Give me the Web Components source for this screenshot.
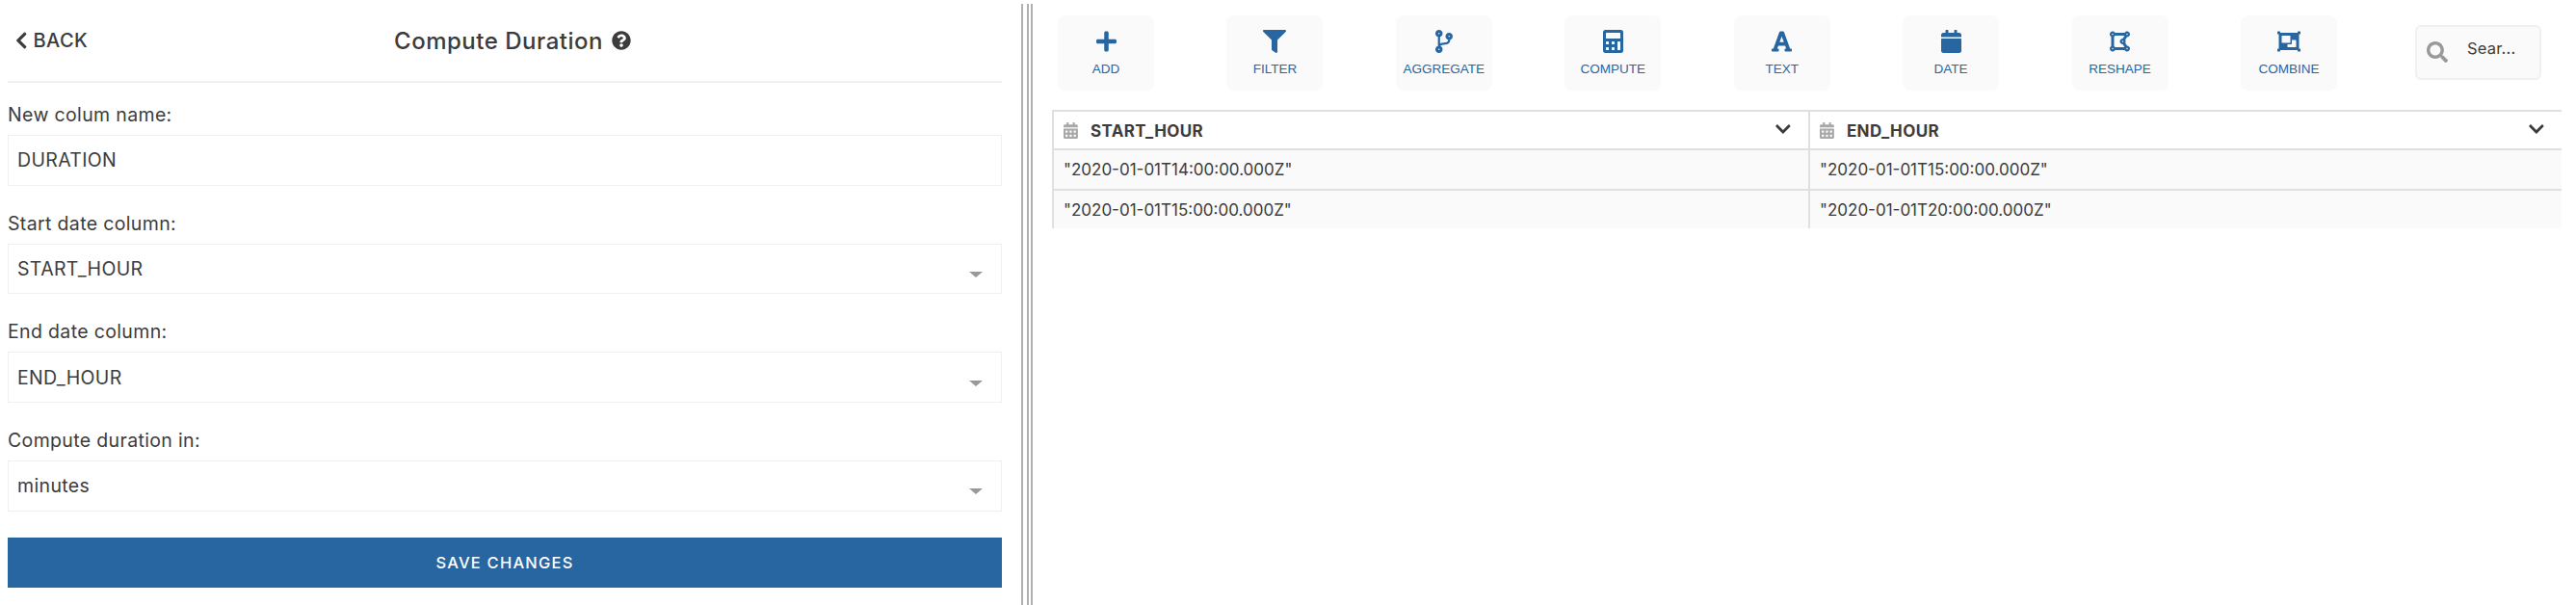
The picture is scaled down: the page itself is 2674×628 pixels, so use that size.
<!DOCTYPE html>
<html lang="en">
<head>
<meta charset="utf-8">
<title>Compute Duration</title>
<style>
  html, body { margin: 0; height: 100%; background: #fff; }
  body { overflow: hidden; font-family: "Inter", "Liberation Sans", sans-serif; color: #3c3c3c; }
</style>
</head>
<body>
<app-page>
  <transform-form slot="left" title-text="Compute Duration">
    <form-field label="New colum name:" value="DURATION"></form-field>
    <form-field label="Start date column:" value="START_HOUR" select></form-field>
    <form-field label="End date column:" value="END_HOUR" select></form-field>
    <form-field label="Compute duration in:" value="minutes" select></form-field>
  </transform-form>
  <data-pane slot="right">
    <tool-bar>
      <tool-tile icon="plus" label="ADD"></tool-tile>
      <tool-tile icon="filter" label="FILTER"></tool-tile>
      <tool-tile icon="branch" label="AGGREGATE"></tool-tile>
      <tool-tile icon="calculator" label="COMPUTE"></tool-tile>
      <tool-tile icon="font" label="TEXT"></tool-tile>
      <tool-tile icon="calendar" label="DATE"></tool-tile>
      <tool-tile icon="polygon" label="RESHAPE"></tool-tile>
      <tool-tile icon="group" label="COMBINE"></tool-tile>
    </tool-bar>
    <data-table></data-table>
  </data-pane>
</app-page>
<script>
const ICONS = {
  plus: [448, 'M416 208H272V64c0-17.67-14.33-32-32-32h-32c-17.67 0-32 14.33-32 32v144H32c-17.67 0-32 14.33-32 32v32c0 17.67 14.33 32 32 32h144v144c0 17.67 14.33 32 32 32h32c17.67 0 32-14.33 32-32V304h144c17.67 0 32-14.33 32-32v-32c0-17.67-14.33-32-32-32z'],
  filter: [512, 'M487.976 0H24.028C2.71 0-8.047 25.866 7.058 40.971L192 225.941V432c0 7.831 3.821 15.17 10.237 19.662l80 55.98C298.02 518.69 320 507.493 320 487.98V225.941l184.947-184.97C520.021 25.896 509.338 0 487.976 0z'],
  branch: [384, 'M384 144c0-44.2-35.8-80-80-80s-80 35.8-80 80c0 36.4 24.3 67.1 57.5 76.8-.6 16.1-4.2 28.5-11 36.9-15.4 19.2-49.3 22.4-85.2 25.7-28.2 2.6-57.4 5.4-81.3 16.9v-144c32.5-10.2 56-40.5 56-76.3 0-44.2-35.8-80-80-80S0 35.8 0 80c0 35.8 23.5 66.1 56 76.3v199.3C23.5 365.9 0 396.2 0 432c0 44.2 35.8 80 80 80s80-35.8 80-80c0-34-21.2-63.1-51.2-74.6 3.1-5.2 7.8-9.8 14.9-13.4 16.2-8.2 40.4-10.4 66.1-12.8 42.2-3.9 90-8.4 118.2-43.4 14-17.4 21.1-39.8 21.6-67.9 31.6-10.8 54.4-40.7 54.4-75.9zM80 64c8.8 0 16 7.2 16 16s-7.2 16-16 16-16-7.2-16-16 7.2-16 16-16zm0 384c-8.8 0-16-7.2-16-16s7.2-16 16-16 16 7.2 16 16-7.2 16-16 16zm224-320c8.8 0 16 7.2 16 16s-7.2 16-16 16-16-7.2-16-16 7.2-16 16-16z'],
  calculator: [448, 'M400 0H48C22.4 0 0 22.4 0 48v416c0 25.6 22.4 48 48 48h352c25.6 0 48-22.4 48-48V48c0-25.6-22.4-48-48-48zM128 435.2c0 6.4-6.4 12.8-12.8 12.8H76.8c-6.4 0-12.8-6.4-12.8-12.8v-38.4c0-6.4 6.4-12.8 12.8-12.8h38.4c6.4 0 12.8 6.4 12.8 12.8v38.4zm0-128c0 6.4-6.4 12.8-12.8 12.8H76.8c-6.4 0-12.8-6.4-12.8-12.8v-38.4c0-6.4 6.4-12.8 12.8-12.8h38.4c6.4 0 12.8 6.4 12.8 12.8v38.4zm128 128c0 6.4-6.4 12.8-12.8 12.8h-38.4c-6.4 0-12.8-6.4-12.8-12.8v-38.4c0-6.4 6.4-12.8 12.8-12.8h38.4c6.4 0 12.8 6.4 12.8 12.8v38.4zm0-128c0 6.4-6.4 12.8-12.8 12.8h-38.4c-6.4 0-12.8-6.4-12.8-12.8v-38.4c0-6.4 6.4-12.8 12.8-12.8h38.4c6.4 0 12.8 6.4 12.8 12.8v38.4zm128 128c0 6.4-6.4 12.8-12.8 12.8h-38.4c-6.4 0-12.8-6.4-12.8-12.8V268.8c0-6.4 6.4-12.8 12.8-12.8h38.4c6.4 0 12.8 6.4 12.8 12.8v166.4zm0-256c0 6.4-6.4 12.8-12.8 12.8H76.8c-6.4 0-12.8-6.4-12.8-12.8V76.8C64 70.4 70.4 64 76.8 64h294.4c6.4 0 12.8 6.4 12.8 12.8v102.4z'],
  font: [448, 'M432 416h-23.41L277.88 53.69A32 32 0 0 0 247.58 32h-47.16a32 32 0 0 0-30.3 21.69L39.41 416H16a16 16 0 0 0-16 16v32a16 16 0 0 0 16 16h128a16 16 0 0 0 16-16v-32a16 16 0 0 0-16-16h-19.58l23.3-64h152.56l23.3 64H304a16 16 0 0 0-16 16v32a16 16 0 0 0 16 16h128a16 16 0 0 0 16-16v-32a16 16 0 0 0-16-16zM176.85 272L224 142.51 271.15 272z'],
  calendar: [448, 'M12 192h424c6.6 0 12 5.4 12 12v260c0 26.5-21.5 48-48 48H48c-26.5 0-48-21.5-48-48V204c0-6.6 5.4-12 12-12zm436-44v-36c0-26.5-21.5-48-48-48h-48V12c0-6.6-5.4-12-12-12h-40c-6.6 0-12 5.4-12 12v52H160V12c0-6.6-5.4-12-12-12h-40c-6.6 0-12 5.4-12 12v52H48C21.5 64 0 85.5 0 112v36c0 6.6 5.4 12 12 12h424c6.6 0 12-5.4 12-12z'],
  calendarAlt: [448, 'M0 464c0 26.5 21.5 48 48 48h352c26.5 0 48-21.5 48-48V192H0v272zm320-196c0-6.6 5.4-12 12-12h40c6.6 0 12 5.4 12 12v40c0 6.6-5.4 12-12 12h-40c-6.6 0-12-5.4-12-12v-40zm0 128c0-6.6 5.4-12 12-12h40c6.6 0 12 5.4 12 12v40c0 6.6-5.4 12-12 12h-40c-6.6 0-12-5.4-12-12v-40zM192 268c0-6.6 5.4-12 12-12h40c6.6 0 12 5.4 12 12v40c0 6.6-5.4 12-12 12h-40c-6.6 0-12-5.4-12-12v-40zm0 128c0-6.6 5.4-12 12-12h40c6.6 0 12 5.4 12 12v40c0 6.6-5.4 12-12 12h-40c-6.6 0-12-5.4-12-12v-40zM64 268c0-6.6 5.4-12 12-12h40c6.6 0 12 5.4 12 12v40c0 6.6-5.4 12-12 12H76c-6.6 0-12-5.4-12-12v-40zm0 128c0-6.6 5.4-12 12-12h40c6.6 0 12 5.4 12 12v40c0 6.6-5.4 12-12 12H76c-6.6 0-12-5.4-12-12v-40zM400 64h-48V16c0-8.8-7.2-16-16-16h-32c-8.8 0-16 7.2-16 16v48H160V16c0-8.8-7.2-16-16-16h-32c-8.8 0-16 7.2-16 16v48H48C21.5 64 0 85.5 0 112v48h448v-48c0-26.5-21.5-48-48-48z'],
  polygon: [448, 'M384 352c-.35 0-.67.1-1.02.1l-39.2-65.32c5.07-9.17 8.22-19.56 8.22-30.78s-3.14-21.61-8.22-30.78l39.2-65.32c.35.01.67.1 1.02.1 35.35 0 64-28.65 64-64s-28.65-64-64-64c-23.63 0-44.04 12.95-55.12 32H119.12C108.04 44.95 87.63 32 64 32 28.65 32 0 60.65 0 96c0 23.63 12.95 44.04 32 55.12v209.75C12.95 371.96 0 392.37 0 416c0 35.35 28.65 64 64 64 23.63 0 44.04-12.95 55.12-32h209.75c11.09 19.05 31.49 32 55.12 32 35.35 0 64-28.65 64-64 .01-35.35-28.64-64-63.99-64zm-288 8.88V151.12A63.825 63.825 0 0 0 119.12 128h208.36l-38.46 64.1c-.35-.01-.67-.1-1.02-.1-35.35 0-64 28.65-64 64s28.65 64 64 64c.35 0 .67-.09 1.02-.1l38.46 64.1H119.12a63.825 63.825 0 0 0-23.12-23.12zM272 256c0-8.82 7.18-16 16-16s16 7.18 16 16-7.18 16-16 16-16-7.18-16-16zM400 96c0 8.82-7.18 16-16 16s-16-7.18-16-16 7.18-16 16-16 16 7.18 16 16zM64 80c8.82 0 16 7.18 16 16s-7.18 16-16 16-16-7.18-16-16 7.18-16 16-16zM48 416c0-8.82 7.18-16 16-16s16 7.18 16 16-7.18 16-16 16-16-7.18-16-16zm336 16c-8.82 0-16-7.18-16-16s7.18-16 16-16 16 7.18 16 16-7.18 16-16 16z'],
  group: [512, 'M480 128V96h20c6.627 0 12-5.373 12-12V44c0-6.627-5.373-12-12-12h-40c-6.627 0-12 5.373-12 12v20H64V44c0-6.627-5.373-12-12-12H12C5.373 32 0 37.373 0 44v40c0 6.627 5.373 12 12 12h20v320H12c-6.627 0-12 5.373-12 12v40c0 6.627 5.373 12 12 12h40c6.627 0 12-5.373 12-12v-20h384v20c0 6.627 5.373 12 12 12h40c6.627 0 12-5.373 12-12v-40c0-6.627-5.373-12-12-12h-20V128zM96 276V140c0-6.627 5.373-12 12-12h168c6.627 0 12 5.373 12 12v136c0 6.627-5.373 12-12 12H108c-6.627 0-12-5.373-12-12zm320 96c0 6.627-5.373 12-12 12H236c-6.627 0-12-5.373-12-12v-52h72c13.255 0 24-10.745 24-24v-72h84c6.627 0 12 5.373 12 12v136z'],
  chevronDown: [448, 'M207.029 381.476L12.686 187.132c-9.373-9.373-9.373-24.569 0-33.941l22.667-22.667c9.357-9.357 24.522-9.375 33.901-.04L224 284.505l154.745-154.021c9.379-9.335 24.544-9.317 33.901.04l22.667 22.667c9.373 9.373 9.373 24.569 0 33.941L240.971 381.476c-9.373 9.372-24.569 9.372-33.942 0z'],
  chevronLeft: [320, 'M34.52 239.03L228.87 44.69c9.37-9.37 24.57-9.37 33.94 0l22.67 22.67c9.36 9.36 9.37 24.52.04 33.9L131.49 256l154.02 154.75c9.34 9.38 9.32 24.54-.04 33.9l-22.67 22.67c-9.37 9.37-24.57 9.37-33.94 0L34.52 272.97c-9.37-9.37-9.37-24.57 0-33.94z'],
  search: [512, 'M505 442.7L405.3 343c-4.5-4.5-10.6-7-17-7H372c27.6-35.3 44-79.7 44-128C416 93.1 322.9 0 208 0S0 93.1 0 208s93.1 208 208 208c48.3 0 92.7-16.4 128-44v16.3c0 6.4 2.5 12.5 7 17l99.7 99.7c9.4 9.4 24.6 9.4 33.9 0l28.3-28.3c9.4-9.4 9.4-24.6.1-34zM208 336c-70.7 0-128-57.2-128-128 0-70.7 57.2-128 128-128 70.7 0 128 57.2 128 128 0 70.7-57.2 128-128 128z'],
  question: [512, 'M504 256c0 136.997-111.043 248-248 248S8 392.997 8 256C8 119.083 119.043 8 256 8s248 111.083 248 248zM262.655 90c-54.497 0-89.255 22.957-116.549 63.758-3.536 5.286-2.353 12.415 2.715 16.258l34.699 26.31c5.205 3.947 12.621 3.008 16.665-2.122 17.864-22.658 30.113-35.797 57.303-35.797 20.429 0 45.698 13.148 45.698 32.958 0 14.976-12.363 22.667-32.534 33.976C247.128 238.528 216 254.941 216 296v4c0 6.627 5.373 12 12 12h56c6.627 0 12-5.373 12-12v-1.333c0-28.462 83.186-29.647 83.186-106.667 0-58.002-60.165-102-116.531-102zM256 338c-25.365 0-46 20.635-46 46 0 25.364 20.635 46 46 46s46-20.636 46-46c0-25.365-20.635-46-46-46z']
};

class FaIcon extends HTMLElement {
  connectedCallback() {
    const [w, d] = ICONS[this.getAttribute('name')];
    const size = Number(this.getAttribute('size') || 24);
    this.attachShadow({ mode: 'open' });
    this.shadowRoot.innerHTML = `
      <style>
        :host { display: inline-flex; line-height: 0; flex: none; }
        svg { fill: currentColor; display: block; }
      </style>
      <svg xmlns="http://www.w3.org/2000/svg" viewBox="0 0 ${w} 512" width="${size * w / 512}" height="${size}"><path d="${d}"/></svg>`;
  }
}
customElements.define('fa-icon', FaIcon);

class AppPage extends HTMLElement {
  connectedCallback() {
    this.attachShadow({ mode: 'open' });
    this.shadowRoot.innerHTML = `
      <style>
        :host { display: flex; height: 628px; width: 2674px; overflow: hidden; }
        .left { width: 1060px; flex: none; }
        .splitter {
          flex: none; width: 12px; margin-top: 4px; box-sizing: border-box;
          border-left: 2px solid #b0b0b0; border-right: 2px solid #b0b0b0;
          display: flex; justify-content: center;
        }
        .splitter::before { content: ""; width: 2px; margin-left: 2px; background: #b0b0b0; }
        .right { flex: 1; min-width: 0; }
      </style>
      <div class="left"><slot name="left"></slot></div>
      <div class="splitter"></div>
      <div class="right"><slot name="right"></slot></div>`;
  }
}
customElements.define('app-page', AppPage);

class TransformForm extends HTMLElement {
  connectedCallback() {
    this.attachShadow({ mode: 'open' });
    this.shadowRoot.innerHTML = `
      <style>
        :host { display: block; padding: 0 20px 0 8px; }
        header {
          height: 84px; border-bottom: 2px solid #f0f0f0;
          display: grid; grid-template-columns: 1fr auto 1fr; align-items: center;
        }
        .back {
          display: flex; align-items: center; gap: 6px; padding-left: 8px;
          font-size: 20px; font-weight: 500; letter-spacing: .4px;
        }
        h1 {
          margin: 0 0 0 16px; font-size: 24px; font-weight: 500; color: #3c3c3c;
          display: flex; align-items: center; gap: 9px; letter-spacing: .5px;
        }
        .fields { display: flex; flex-direction: column; gap: 25.1px; padding-top: 19px; }
        button {
          display: block; width: 100%; height: 52px; margin-top: 27.4px; border: 0; padding: 0;
          background: #2866a2; color: #fff; font: 500 16.5px "Inter", "Liberation Sans", sans-serif;
          letter-spacing: 1.2px;
        }
      </style>
      <header>
        <div class="back"><fa-icon name="chevronLeft" size="20"></fa-icon><span>BACK</span></div>
        <h1>${this.getAttribute('title-text')} <fa-icon name="question" size="20"></fa-icon></h1>
        <div></div>
      </header>
      <div class="fields"><slot></slot></div>
      <button type="button">SAVE CHANGES</button>`;
  }
}
customElements.define('transform-form', TransformForm);

class FormField extends HTMLElement {
  connectedCallback() {
    const isSelect = this.hasAttribute('select');
    this.attachShadow({ mode: 'open' });
    this.shadowRoot.innerHTML = `
      <style>
        :host { display: block; font-size: 19.5px; letter-spacing: .35px; color: #3c3c3c; }
        label { display: block; height: 28px; line-height: 28px; margin-bottom: 7px; }
        .box {
          box-sizing: border-box; height: 52.6px; border: 1px solid #f0f0f0;
          display: flex; align-items: center; justify-content: space-between;
          padding: 0 19px 0 9px;
        }
        .arrow {
          width: 0; height: 0; margin-top: 12px;
          border-left: 7px solid transparent; border-right: 7px solid transparent;
          border-top: 6.5px solid #999;
        }
      </style>
      <label>${this.getAttribute('label')}</label>
      <div class="box"><span>${this.getAttribute('value')}</span>${isSelect ? '<i class="arrow"></i>' : ''}</div>`;
  }
}
customElements.define('form-field', FormField);

class DataPane extends HTMLElement {
  connectedCallback() {
    this.attachShadow({ mode: 'open' });
    this.shadowRoot.innerHTML = `
      <style>
        :host { display: block; padding: 16px 15px 0 20px; }
      </style>
      <slot></slot>`;
  }
}
customElements.define('data-pane', DataPane);

class ToolBar extends HTMLElement {
  connectedCallback() {
    this.attachShadow({ mode: 'open' });
    this.shadowRoot.innerHTML = `
      <style>
        :host { display: flex; align-items: flex-start; height: 78px; margin-bottom: 20px; padding-left: 6px; }
        .tiles { width: 1328px; flex: none; display: flex; justify-content: space-between; }
        .search {
          box-sizing: border-box; width: 131px; height: 57px; margin: 10px 0 0 81px;
          border: 2px solid #f0f0f0; border-radius: 6px; background: #fafafa;
          display: flex; gap: 20px; padding: 15px 0 0 10px; color: #999;
        }
        .search span { color: #3c3c3c; font-size: 16.5px; line-height: 20px; letter-spacing: .2px; margin-top: -3px; }
      </style>
      <div class="tiles"><slot></slot></div>
      <div class="search"><fa-icon name="search" size="22"></fa-icon><span>Sear...</span></div>`;
  }
}
customElements.define('tool-bar', ToolBar);

class ToolTile extends HTMLElement {
  connectedCallback() {
    this.attachShadow({ mode: 'open' });
    this.shadowRoot.innerHTML = `
      <style>
        :host {
          display: flex; flex-direction: column; align-items: center; box-sizing: border-box;
          width: 100px; height: 78px; padding-top: 15px; border-radius: 8px;
          background: #fafafa; color: #2866a2;
        }
        span { font: 13.5px/16px "Liberation Sans", Arial, sans-serif; margin-top: 9px; }
      </style>
      <fa-icon name="${this.getAttribute('icon')}" size="24"></fa-icon>
      <span>${this.getAttribute('label')}</span>`;
  }
}
customElements.define('tool-tile', ToolTile);

class ColumnHead extends HTMLElement {
  connectedCallback() {
    this.attachShadow({ mode: 'open' });
    this.shadowRoot.innerHTML = `
      <style>
        :host {
          display: flex; align-items: center; height: 38px; padding: 0 17px 0 10px;
          background: #fff; font-size: 17px; font-weight: 700; color: #3c3c3c; letter-spacing: .4px;
        }
        .cal { color: #a8a8a8; margin-right: 13px; display: flex; }
        .name { flex: 1; padding-top: 1px; }
        .down { display: flex; margin-top: -2px; margin-right: 1px; color: #3c3c3c; }
      </style>
      <span class="cal"><fa-icon name="calendarAlt" size="17"></fa-icon></span>
      <span class="name"><slot></slot></span>
      <span class="down"><fa-icon name="chevronDown" size="18"></fa-icon></span>`;
  }
}
customElements.define('column-head', ColumnHead);

class DataTable extends HTMLElement {
  connectedCallback() {
    const rows = [
      ['"2020-01-01T14:00:00.000Z"', '"2020-01-01T15:00:00.000Z"'],
      ['"2020-01-01T15:00:00.000Z"', '"2020-01-01T20:00:00.000Z"']
    ];
    this.attachShadow({ mode: 'open' });
    this.shadowRoot.innerHTML = `
      <style>
        :host {
          display: grid; grid-template-columns: 783px 1fr; column-gap: 2px; row-gap: 2px;
          width: 1567px; box-sizing: border-box;
          border-top: 2px solid #e0e0e0; border-left: 2px solid #e0e0e0; background: #e0e0e0;
        }
        .cell {
          height: 40px; background: #fafafa; padding-left: 10px;
          display: flex; align-items: center; font-size: 17px; color: #3c3c3c;
        }
        .cell.last { height: 39px; }
      </style>
      <column-head>START_HOUR</column-head>
      <column-head>END_HOUR</column-head>
      ${rows.map((r, i) => r.map(v => `<div class="cell ${i === 1 ? 'last' : ''}">${v}</div>`).join('')).join('')}`;
  }
}
customElements.define('data-table', DataTable);
</script>
</body>
</html>
